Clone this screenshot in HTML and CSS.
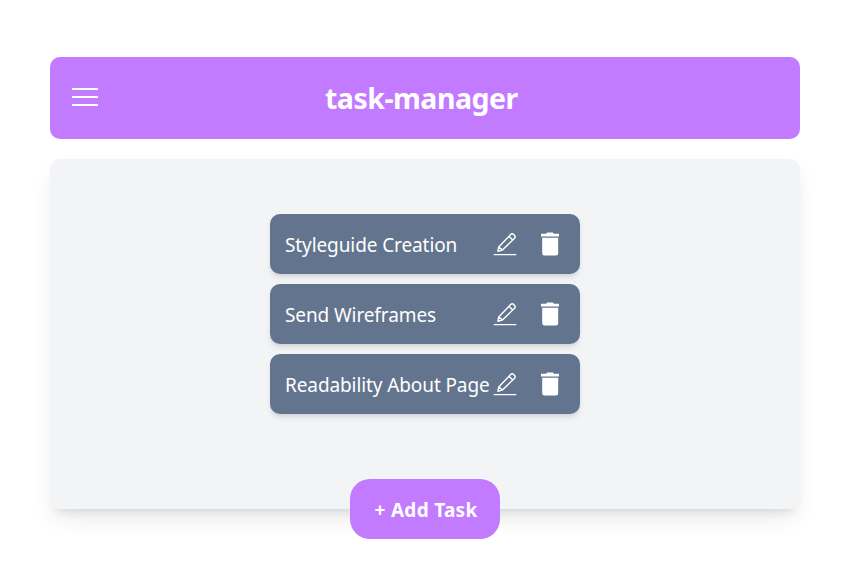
FILE: index.html
```html
<!DOCTYPE html>
<html lang="en">
<head>
<meta charset="utf-8">
<title>task-manager</title>
<link rel="stylesheet" href="styles.css">
</head>
<body>
<svg class="sprite" aria-hidden="true">
  <symbol id="edit" viewBox="0 0 24 24">
    <path d="M1.2 22.6H22.8M4.9 19.2 5.7 14.9 17.6 2.6Q19 1.1 20.6 2.4L21.6 3.4Q22.9 4.8 21.5 6.3L9.4 18.1ZM5.7 14.9 9.4 18.1M16 4.3 19.7 8" fill="none" stroke="currentColor" stroke-width="1.4" stroke-linejoin="round" stroke-linecap="round"/>
  </symbol>
  <symbol id="trash" viewBox="0 0 20 24">
    <path d="M2.2 5.7H18.2V21.1A2.5 2.5 0 0 1 15.7 23.6H4.7A2.5 2.5 0 0 1 2.2 21.1ZM1 1.7H6L7.2.5H12.8L14 1.7H19V4.5H1Z" fill="currentColor"/>
  </symbol>
</svg>
<main class="app">
  <header class="header">
    <svg class="menu" viewBox="0 0 26 18"><path d="M0 1H26M0 9H26M0 17H26" stroke="currentColor" stroke-width="2"/></svg>
    <h1 class="title">task-manager</h1>
  </header>
  <section class="board">
    <ul class="tasks">
      <li class="task"><span class="name">Styleguide Creation</span><svg class="edit"><use href="#edit"/></svg><svg class="trash"><use href="#trash"/></svg></li>
      <li class="task"><span class="name">Send Wireframes</span><svg class="edit"><use href="#edit"/></svg><svg class="trash"><use href="#trash"/></svg></li>
      <li class="task"><span class="name">Readability About Page</span><svg class="edit"><use href="#edit"/></svg><svg class="trash"><use href="#trash"/></svg></li>
    </ul>
    <button class="add">+ Add Task</button>
  </section>
</main>
</body>
</html>
```
FILE: styles.css
```css
* { box-sizing: border-box; margin: 0; padding: 0; }
body { min-height: 572px; padding: 57px 0 0 50px; background: #fff; color: #fff; font-family: "Segoe UI", "Noto Sans", sans-serif; }
.sprite { display: none; }
.app { width: 750px; }
.header { display: flex; align-items: center; height: 82px; padding-left: 22px; border-radius: 10px; background: #c27aff; }
.menu { width: 26px; height: 18px; margin-top: -2px; }
.title { margin-left: 227px; font-size: 28.5px; line-height: 40px; font-weight: 700; letter-spacing: -0.5px; white-space: nowrap; }
.board { display: flex; flex-direction: column; align-items: center; justify-content: space-between; height: 350px; margin-top: 20px; padding-top: 55px; border-radius: 10px; background: #f3f4f6; box-shadow: 0 12px 25px -5px rgb(0 0 0 / .1), 0 8px 10px -6px rgb(0 0 0 / .1); }
.tasks { display: flex; flex-direction: column; gap: 10px; list-style: none; }
.task { display: flex; align-items: center; width: 310px; height: 60px; padding: 0 20px 0 15px; border-radius: 10px; background: #62748e; box-shadow: 0 4px 6px -1px rgb(0 0 0 / .1), 0 2px 4px -2px rgb(0 0 0 / .1); }
.name { width: 208px; padding-top: 2px; font-size: 19px; line-height: 30px; letter-spacing: -0.1px; white-space: nowrap; }
.edit { flex: none; width: 24px; height: 24px; }
.trash { flex: none; width: 20px; height: 24px; margin-left: 23px; }
.add { width: 150px; height: 60px; margin-bottom: -30px; padding: 2px 0 0 2px; border: 0; border-radius: 20px; background: #c27aff; color: #fff; font: 700 19px/30px "Segoe UI", "Noto Sans", sans-serif; letter-spacing: .3px; white-space: nowrap; }
```
